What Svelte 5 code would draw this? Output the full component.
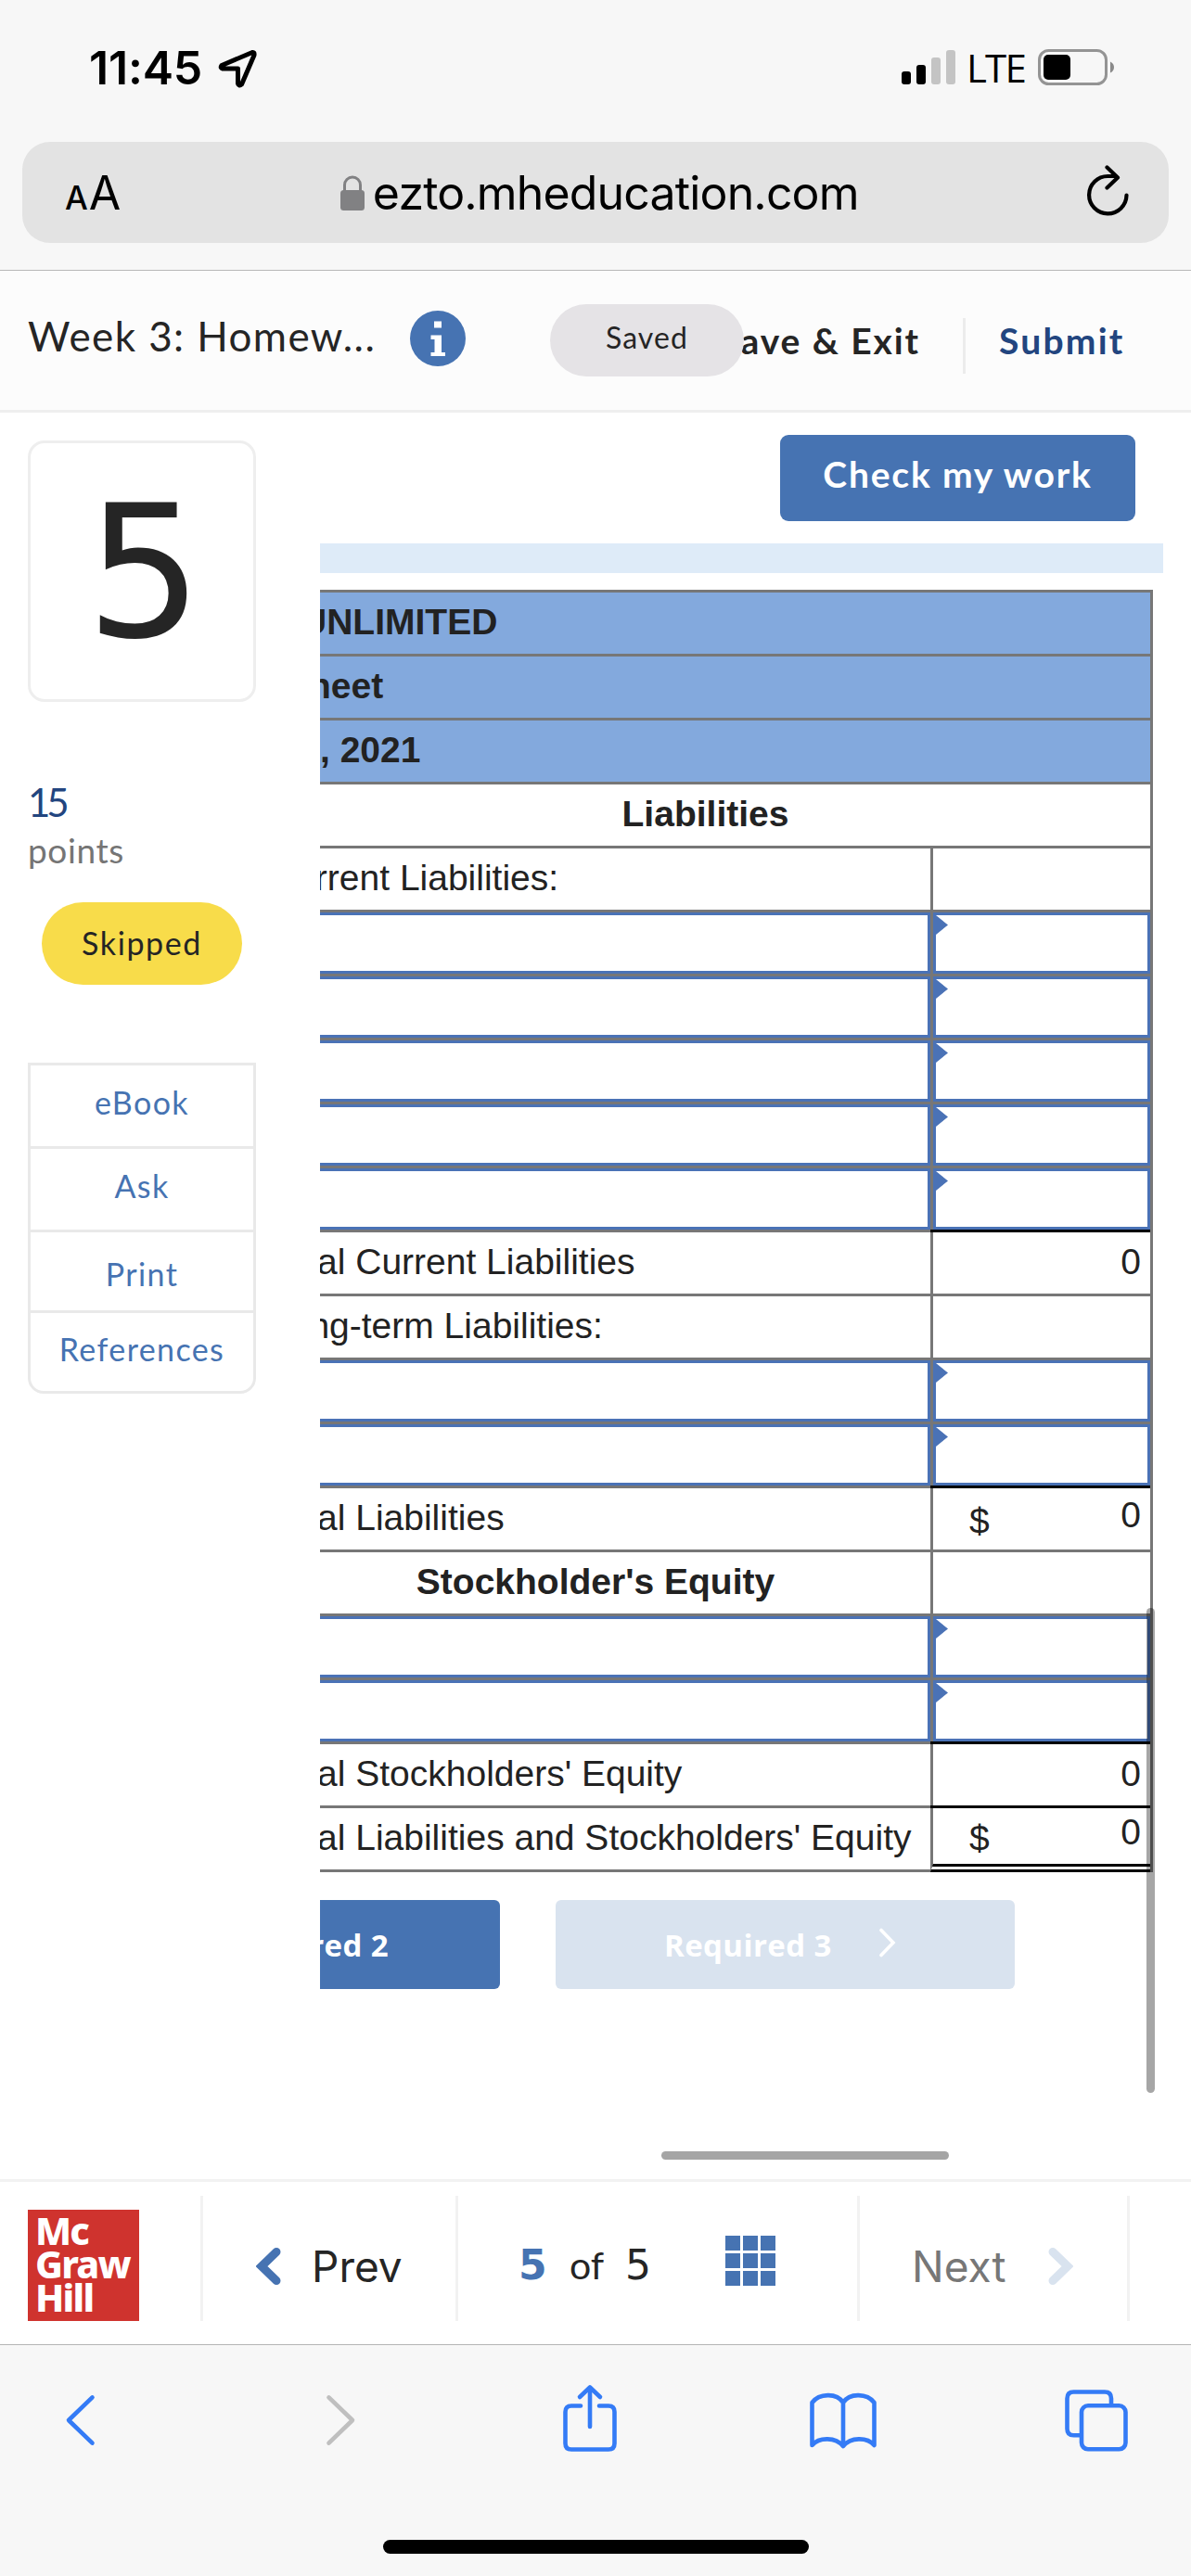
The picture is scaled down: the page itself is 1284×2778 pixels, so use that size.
<script lang="ts">
  type Row = {
    kind: "banner" | "wide" | "label" | "title" | "input";
    text?: string;
    indent?: number;
    value?: string;
    currency?: boolean;
    rule?: boolean;
    last?: boolean;
  };

  const rows: Row[] = [
    { kind: "banner", text: "UNLIMITED", indent: 45 },
    { kind: "banner", text: "Sheet", indent: 28 },
    { kind: "banner", text: ", 2021", indent: 66 },
    { kind: "wide", text: "Liabilities" },
    { kind: "label", text: "Current Liabilities:" },
    { kind: "input" },
    { kind: "input" },
    { kind: "input" },
    { kind: "input" },
    { kind: "input", rule: true },
    { kind: "label", text: "Total Current Liabilities", value: "0" },
    { kind: "label", text: "Long-term Liabilities:" },
    { kind: "input" },
    { kind: "input", rule: true },
    { kind: "label", text: "Total Liabilities", value: "0", currency: true },
    { kind: "title", text: "Stockholder's Equity" },
    { kind: "input" },
    { kind: "input", rule: true },
    { kind: "label", text: "Total Stockholders' Equity", value: "0", rule: true },
    {
      kind: "label",
      text: "Total Liabilities and Stockholders' Equity",
      value: "0",
      currency: true,
      last: true,
    },
  ];

  const resources = ["eBook", "Ask", "Print", "References"];
  const dots = Array.from({ length: 9 });
</script>

<main>
  <div class="status">
    <span class="time">11:45</span>
    <svg class="location" width="44" height="44" viewBox="0 0 44 44">
      <path d="M38 4.5 5 18.500q-2 2.700 1 3.500H22.500V38q1.200 3.600 4 1L40 7.500q.5-3.500-2-3Z" />
    </svg>
    <div class="status-right">
      <svg width="58" height="38" viewBox="0 0 58 38">
        <rect x="0" y="23" width="10" height="14" rx="3" />
        <rect x="16" y="16" width="10" height="21" rx="3" />
        <rect x="32" y="8" width="10" height="29" rx="3" fill="#c4c4c4" />
        <rect x="48" y="0" width="10" height="37" rx="3" fill="#c4c4c4" />
      </svg>
      <span class="lte">LTE</span>
      <svg width="84" height="40" viewBox="0 0 84 40">
        <rect x="1.500" y="1.500" width="72" height="36" rx="10" fill="none" stroke="#949494" stroke-width="3" />
        <rect x="6" y="6" width="29" height="27" rx="5" />
        <path d="M78 13.500q4 2 4 6t-4 6z" fill="#8a8a8a" />
      </svg>
    </div>
  </div>

  <div class="address">
    <div class="bar">
      <span class="small-a">A</span><span class="big-a">A</span>
      <svg class="lock" width="26" height="38" viewBox="0 0 26 38">
        <path d="M4.500 18V10.500a8.500 8.500 0 0 1 17 0V18" fill="none" stroke="#818183" stroke-width="3" />
        <rect y="16" width="26" height="22" rx="3.500" fill="#818183" />
      </svg>
      <span class="url">ezto.mheducation.com</span>
      <svg class="reload" width="46" height="56" viewBox="0 0 46 56">
        <path d="M42.500 32.500A20.200 20.200 0 1 1 22.500 12h9M21.500 2.500 33 13.500 21.500 24.500" />
      </svg>
    </div>
  </div>

  <header>
    <span class="course">Week 3: Homew...</span>
    <span class="info">
      <svg width="60" height="60" viewBox="0 0 60 60">
        <circle cx="30" cy="30" r="30" fill="#4673b2" />
        <path d="M26 11.500h8v7h-8zM22.500 26.500H34v18.500h4v4H22.500v-4H26.500V31h-4z" fill="#fff" />
      </svg>
    </span>
    <div class="exit">
      <span>Save &amp; Exit</span>
      <div class="saved">Saved</div>
    </div>
    <i class="divider"></i>
    <span class="submit">Submit</span>
  </header>

  <div class="body">
    <aside>
      <div class="number">5</div>
      <div class="score">15</div>
      <div class="points">points</div>
      <div class="skipped">Skipped</div>
      <ul>
        {#each resources as resource}
          <li>{resource}</li>
        {/each}
      </ul>
    </aside>

    <section>
      <button class="check">Check my work</button>
      <div class="band"></div>
      <div class="pane">
        <div class="sheet">
          {#each rows as row}
            <div class="row {row.kind}" class:rule={row.rule} class:last={row.last}>
              {#if row.kind === "banner"}
                <div class="cell" style="padding-left: {row.indent}px">{row.text}</div>
              {:else if row.kind === "wide"}
                <div class="cell">{row.text}</div>
              {:else if row.kind === "input"}
                <div class="cell"><div class="field"></div></div>
                <div class="amount"><div class="field"><i class="flag"></i></div></div>
              {:else}
                <div class="cell">{row.text}</div>
                <div class="amount" class:money={row.currency}>
                  {#if row.currency}<span class="dollar">$</span>{/if}
                  {#if row.value}<span class="value">{row.value}</span>{/if}
                </div>
              {/if}
            </div>
          {/each}
        </div>
        <div class="steps">
          <button class="step back">Required 2</button>
          <button class="step next">
            Required 3
            <svg width="20" height="32" viewBox="0 0 20 32">
              <path d="M3 2.500 16 16 3 29.500" fill="none" stroke="#fff" stroke-width="3.600" stroke-linecap="round" />
            </svg>
          </button>
        </div>
      </div>
      <i class="scroll-y"></i>
      <i class="scroll-x"></i>
    </section>
  </div>

  <nav>
    <div class="slot brand">
      <div class="logo"><span>Mc</span><span>Graw</span><span>Hill</span></div>
    </div>
    <div class="slot prev">
      <svg width="28" height="42" viewBox="0 0 28 42">
        <path d="M22 5.500 6 21 22 36.500" fill="none" stroke="#4673b2" stroke-width="9" stroke-linecap="round" />
      </svg>
      <span>Prev</span>
    </div>
    <div class="slot pages">
      <b>5</b><span class="of">of</span><span class="total">5</span>
      <div class="grid">
        {#each dots as _}<i></i>{/each}
      </div>
    </div>
    <div class="slot following">
      <span>Next</span>
      <svg width="28" height="42" viewBox="0 0 28 42">
        <path d="M6 5.500 22 21 6 36.500" fill="none" stroke="#d9e3ef" stroke-width="9" stroke-linecap="round" />
      </svg>
    </div>
  </nav>

  <footer>
    <div class="tools">
      <svg width="34" height="74" viewBox="0 0 34 74">
        <path d="M29.500 14.400 4 39 29.500 63.600" />
      </svg>
      <svg class="forward" width="34" height="74" viewBox="0 0 34 74">
        <path d="M4.500 14.400 30 39 4.500 63.600" />
      </svg>
      <svg class="share" width="58" height="74" viewBox="0 0 58 74">
        <path d="M19 23.500H9q-6.500 0-6.500 6.500v34q0 6.500 6.500 6.500h40q6.500 0 6.500-6.500V30q0-6.500-6.500-6.500H39M29 46V4M18 14 29 3.500 40 14" />
      </svg>
      <svg class="book" width="72" height="74" viewBox="0 0 72 74">
        <path d="M36 20C29 9 10 10 2.500 20V66C10 57 28 57 36 67 44 57 62 57 69.500 66V20C62 10 43 9 36 20ZM36 20V67" />
      </svg>
      <svg class="tabs" width="68" height="74" viewBox="0 0 68 74">
        <path d="M17 55.300H9.500q-7 0-7-7V15.500q0-7 7-7H43q7 0 7 7V22" />
        <rect x="18" y="23.300" width="47.500" height="47" rx="7" />
      </svg>
    </div>
    <div class="home"></div>
  </footer>
</main>

<style>
  :global(body) {
    margin: 0;
    background: #fff;
  }
  main {
    width: 1284px;
    height: 2778px;
    overflow: hidden;
    display: flex;
    flex-direction: column;
    color: #252525;
    font-family: Lato, sans-serif;
  }
  svg {
    display: block;
    flex: none;
  }
  button {
    border: 0;
    padding: 0;
    font: inherit;
    color: #fff;
  }
  .status {
    height: 153px;
    box-sizing: border-box;
    padding: 43px 81px 0 96px;
    display: flex;
    align-items: flex-start;
    background: #f7f7f7;
    color: #000;
    font-family: Inter, sans-serif;
  }
  .time {
    width: 138px;
    font-size: 50px;
    font-weight: 600;
    line-height: 60px;
    letter-spacing: -0.2px;
  }
  .location {
    margin-top: 9px;
  }
  .location path {
    fill: none;
    stroke: #000;
    stroke-width: 5;
    stroke-linejoin: round;
  }
  .status-right {
    margin-left: auto;
    display: flex;
    align-items: flex-start;
    padding-top: 10px;
  }
  .status-right svg:first-child {
    margin-top: 1px;
  }
  .lte {
    width: 77px;
    padding-left: 12px;
    font-family: "Open Sans", sans-serif;
    font-size: 42px;
    font-weight: 500;
    line-height: 40px;
    letter-spacing: -1.8px;
    white-space: nowrap;
  }
  .address {
    height: 138px;
    padding: 0 24px;
    background: #f7f7f7;
    border-bottom: 1px solid #b9b9b9;
    color: #000;
    font-family: Inter, sans-serif;
  }
  .bar {
    height: 109px;
    border-radius: 30px;
    background: #e3e3e3;
    display: flex;
    align-items: center;
    padding: 0 42px 0 46px;
    line-height: 109px;
  }
  .small-a {
    font-size: 35px;
    font-weight: 500;
    padding-top: 12px;
  }
  .big-a {
    font-size: 50px;
    width: 36px;
    margin-left: 1px;
    padding-top: 1px;
  }
  .lock {
    margin-left: 235px;
  }
  .url {
    margin-left: 9px;
    padding-top: 2px;
    font-size: 50px;
    letter-spacing: -0.85px;
  }
  .reload {
    margin-left: auto;
    margin-bottom: 4px;
  }
  .reload path {
    fill: none;
    stroke: #000;
    stroke-width: 4.2;
    stroke-linecap: round;
    stroke-linejoin: round;
  }
  header {
    height: 150px;
    border-bottom: 3px solid #efefef;
    background: #fcfcfc;
    display: flex;
    align-items: center;
    padding-left: 30px;
  }
  .course {
    width: 412px;
    font-size: 44px;
    line-height: 140px;
    padding-bottom: 10px;
    letter-spacing: 1.4px;
    white-space: nowrap;
  }
  .info {
    margin-bottom: 4px;
  }
  .exit {
    position: relative;
    width: 399px;
    margin-left: 91px;
    text-align: right;
    font-size: 39px;
    font-weight: 700;
    line-height: 150px;
    letter-spacing: 1.9px;
  }
  .saved {
    position: absolute;
    left: 0;
    top: 36px;
    width: 209px;
    height: 78px;
    border-radius: 39px;
    background: #e5e3e6;
    font-size: 32px;
    font-weight: 400;
    line-height: 72px;
    text-align: center;
    letter-spacing: 1.1px;
  }
  .divider {
    width: 3px;
    height: 60px;
    margin: 12px 36px 0 46px;
    background: #ececec;
  }
  .submit {
    font-size: 39px;
    font-weight: 700;
    color: #22457f;
    letter-spacing: 2.2px;
  }
  .body {
    height: 1905px;
    display: flex;
  }
  aside {
    width: 345px;
    box-sizing: border-box;
    padding: 30px 69px 0 30px;
  }
  .number {
    height: 272px;
    padding: 4px 0 0 5px;
    border: 3px solid #eee;
    border-radius: 18px;
    font-family: "DejaVu Sans", sans-serif;
    font-size: 198px;
    line-height: 272px;
    text-align: center;
  }
  .score {
    margin-top: 80px;
    font-size: 42px;
    line-height: 56px;
    color: #22457f;
    letter-spacing: -4px;
  }
  .points {
    font-size: 37px;
    line-height: 48px;
    color: #757575;
    letter-spacing: 0.6px;
  }
  .skipped {
    width: 216px;
    height: 89px;
    margin: 32px 0 0 15px;
    border-radius: 45px;
    background: #f8dc4a;
    font-size: 34px;
    line-height: 88px;
    text-align: center;
    letter-spacing: 1.6px;
  }
  ul {
    height: 351px;
    margin: 84px 0 0;
    padding: 0;
    list-style: none;
    border: 3px solid #e9e9e9;
    border-radius: 0 0 17px 17px;
    color: #4673b2;
    font-size: 34px;
    text-align: center;
    letter-spacing: 1.4px;
  }
  li {
    height: 87px;
    line-height: 80px;
  }
  li + li {
    border-top: 3px solid #e9e9e9;
  }
  li:nth-child(3) {
    height: 84px;
    line-height: 89px;
  }
  li:nth-child(4) {
    height: 84px;
    line-height: 78px;
  }
  section {
    position: relative;
    flex: 1;
  }
  .check {
    display: block;
    width: 383px;
    height: 93px;
    margin: 24px 0 24px 496px;
    padding-bottom: 9px;
    border-radius: 9px;
    background: #4673b2;
    font-size: 39px;
    font-weight: 700;
    letter-spacing: 1.8px;
  }
  .band {
    width: 909px;
    height: 32px;
    background: #deebf8;
  }
  .pane {
    width: 909px;
    height: 1660px;
    margin-top: 18px;
    overflow: hidden;
  }
  .sheet {
    width: 961px;
    margin-left: -66px;
    border: 3px solid #777;
    border-bottom: 0;
    border-left: 0;
    font-family: "Liberation Sans", Arial, sans-serif;
    font-size: 39px;
    line-height: 64px;
    color: #222;
  }
  .row {
    height: 69px;
    display: flex;
  }
  .cell {
    flex: 1;
    box-sizing: border-box;
    padding-left: 11px;
    border-bottom: 3px solid #777;
    white-space: nowrap;
  }
  .banner .cell {
    background: #83a9dd;
    font-weight: 700;
  }
  .wide .cell,
  .title .cell {
    padding-left: 2px;
    font-weight: 700;
    text-align: center;
  }
  .amount {
    width: 237px;
    box-sizing: border-box;
    border-left: 3px solid #777;
    border-bottom: 3px solid #777;
    display: flex;
    padding-right: 10px;
  }
  .value {
    margin-left: auto;
  }
  .dollar {
    margin-left: 39px;
    line-height: 72px;
  }
  .money .value {
    line-height: 58px;
  }
  .input .cell,
  .input .amount {
    padding: 0;
  }
  .field {
    flex: 1;
    height: 66px;
    box-sizing: border-box;
    border: 3px solid #4a72b6;
  }
  .flag {
    display: block;
    width: 13px;
    height: 21px;
    background: #4a72b6;
    clip-path: polygon(0 0, 100% 50%, 0 100%);
  }
  .rule .amount {
    border-bottom-color: #000;
    border-left: 0;
    box-shadow: inset 3px 0 #777;
    padding-left: 3px;
  }
  .last .amount {
    border-bottom: 9px double #000;
  }
  .last .value {
    line-height: 51px;
  }
  .last .dollar {
    line-height: 65px;
  }
  .steps {
    display: flex;
    gap: 60px;
    margin: 30px 0 0 -301px;
  }
  .step {
    width: 495px;
    height: 96px;
    border-radius: 6px;
    background: #4673b2;
    font-family: "Open Sans", sans-serif;
    font-size: 33px;
    font-weight: 700;
    letter-spacing: 0.4px;
    display: flex;
    align-items: center;
  }
  .back {
    justify-content: flex-end;
    padding-right: 120px;
  }
  .next {
    padding-left: 117px;
    gap: 50px;
    background: #d9e3ef;
  }
  .next svg {
    margin-bottom: 4px;
  }
  .scroll-y {
    position: absolute;
    left: 891px;
    top: 1289px;
    width: 9px;
    height: 523px;
    border-radius: 5px;
    background: rgba(0, 0, 0, 0.35);
  }
  .scroll-x {
    position: absolute;
    left: 368px;
    top: 1875px;
    width: 310px;
    height: 9px;
    border-radius: 5px;
    background: #a5a5a5;
  }
  nav {
    height: 175px;
    border-top: 3px solid #f2f2f2;
    display: flex;
    font-family: Inter, sans-serif;
    font-size: 46px;
    line-height: 60px;
  }
  .slot {
    height: 135px;
    margin-top: 15px;
    border-right: 3px solid #f2f2f2;
    display: flex;
    align-items: center;
  }
  .brand {
    width: 216px;
  }
  .logo {
    width: 112px;
    height: 116px;
    margin: 15px 0 0 30px;
    padding: 4px 0 0 8px;
    background: #cf332e;
    color: #fff;
    display: flex;
    flex-direction: column;
    font-family: "Noto Sans", sans-serif;
    font-size: 41px;
    font-weight: 800;
    line-height: 36px;
    letter-spacing: -1.8px;
  }
  .prev {
    width: 272px;
  }
  .prev svg {
    margin: 17px 0 0 57px;
  }
  .prev span {
    margin: 17px 0 0 32px;
  }
  .pages {
    width: 430px;
    font-size: 44px;
    font-family: "DejaVu Sans", sans-serif;
  }
  .pages b {
    width: 30px;
    margin: 14px 0 0 65px;
    color: #4673b2;
  }
  .of {
    width: 38px;
    margin: 14px 0 0 25px;
    font-family: Lato, sans-serif;
    font-size: 41px;
  }
  .total {
    width: 28px;
    margin: 14px 0 0 22px;
  }
  .grid {
    margin: 4px 0 0 80px;
    display: grid;
    grid-template-columns: repeat(3, 16px);
    gap: 3px;
  }
  .grid i {
    height: 16px;
    background: #4673b2;
  }
  .following {
    width: 288px;
    color: #777;
  }
  .following span {
    margin: 17px 0 0 56px;
  }
  .following svg {
    margin: 17px 0 0 44px;
  }
  footer {
    height: 249px;
    border-top: 1px solid #b5b5b5;
    background: #f7f7f7;
  }
  .tools {
    height: 210px;
    display: flex;
    align-items: flex-start;
    padding: 42px 0 0 70px;
    box-sizing: border-box;
  }
  .tools path,
  .tools rect {
    fill: none;
    stroke: #347bf6;
    stroke-width: 4.6;
    stroke-linecap: round;
    stroke-linejoin: round;
  }
  .tools .forward {
    margin-left: 246px;
  }
  .tools .forward path {
    stroke: #bfbfbf;
  }
  .tools .share {
    margin-left: 223px;
  }
  .tools .book {
    margin-left: 208px;
  }
  .tools .tabs {
    margin-left: 203px;
  }
  .home {
    width: 459px;
    height: 15px;
    margin: 0 auto;
    border-radius: 8px;
    background: #000;
  }
</style>
